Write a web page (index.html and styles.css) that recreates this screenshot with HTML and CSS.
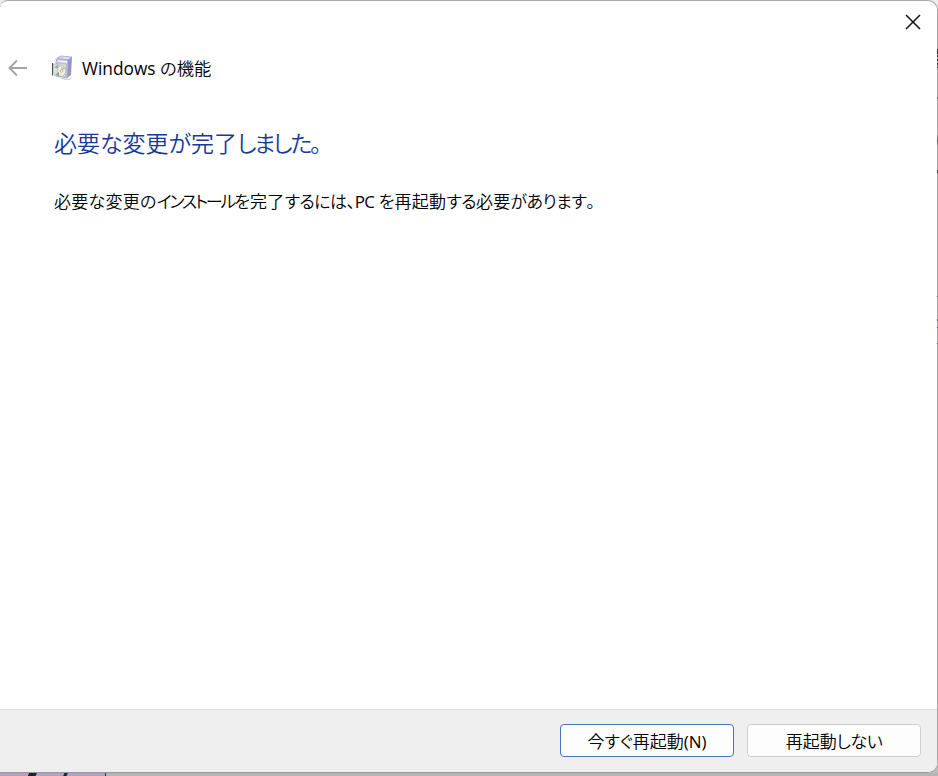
FILE: index.html
```html
<!doctype html>
<html lang="ja">
  <head>
    <meta charset="utf-8">
    <title>Windows の機能</title>
    <link rel="stylesheet" href="styles.css">
  </head>
<body>
<div class="dialog">
  <div class="titlebar">
    <svg class="close" width="16" height="16" viewBox="0 0 16 16"><path d="M1 1L15 15M15 1L1 15"/></svg>
  </div>
  <div class="header">
    <svg class="back" width="20" height="18" viewBox="0 0 20 18"><path d="M19 9H1.5M9 1.5L1.5 9L9 16.5"/></svg>
    <svg class="app_icon" width="24" height="26" viewBox="0 0 24 26">
      <path d="M6 22L18 24L22 21L19 25L14 25Z" fill="#d5d5d5"/>
      <path d="M6 3L10 1L21 2L17 5Z" fill="#dcdcf5" stroke="#9a9bbd" stroke-width=".7"/>
      <path d="M17 5L21 2L20 20L16 23Z" fill="#9395c4"/>
      <path d="M5 4L17 5L16 23L5 21Z" fill="#c6c8e6" stroke="#9a9bbd" stroke-width=".6"/>
      <path d="M7 6L16 7" stroke="#f4f4ff" stroke-width="1.5"/>
      <path d="M2.5 9L15 9L14.5 22L3 20.5Z" fill="#dfe4e6" stroke="#a7aeb3" stroke-width=".6"/>
      <path d="M1.5 8V20.5" stroke="#4c4e55" stroke-width="1.1"/>
      <path d="M3.5 12L8 9L6.5 14Z" fill="#8fb489"/>
      <ellipse cx="10.5" cy="16" rx="4.2" ry="5.3" fill="#f1efe2" stroke="#b4b6ae" stroke-width=".8"/>
      <path d="M10 11.5L14 13L11 16Z" fill="#dcc489"/>
      <path d="M4 20L8 17L8 21Z" fill="#8f9f93"/>
      <circle cx="10.5" cy="16" r="1.3" fill="#fff" stroke="#888" stroke-width=".6"/>
    </svg>
    <div class="app_name">Windows <span class="ja">の機能</span></div>
  </div>
  <div class="contents">
    <h1>必要な変更が完了<span class="kana">しました。</span></h1>
    <p>必要な変更の<span class="katakana">インストール</span>を完了<span class="hiragana">するには、</span><span class="latin">PC</span> を再起動<span class="hiragana">する</span>必要<span class="hiragana">があります</span>。</p>
  </div>
  <div class="footer">
    <button class="primary">今すぐ再起動<span class="latin_key">(N)</span></button>
    <button>再起動<span class="hiragana">しない</span></button>
  </div>
</div>
<div class="desktop"><div class="thumb"></div></div>
<div class="edge"></div>
</body>
</html>
```

FILE: styles.css
```css
html, body {
  margin: 0;
  height: 100%;
  overflow: hidden;
}

body {
  background: linear-gradient(#ededed 50%, #bdbdbd 50%);
  font-family: "Noto Sans CJK JP", sans-serif;
  font-feature-settings: "palt";
  color: #000;
}

.dialog {
  box-sizing: border-box;
  width: 938px;
  height: 773px;
  display: flex;
  flex-direction: column;
  background: #fff;
  border: 1px solid #a9a9a9;
  border-left: 0;
  border-bottom-color: #999;
  border-radius: 8px 10px 10px 0;
  overflow: hidden;
}

.titlebar {
  display: flex;
  justify-content: flex-end;
  height: 41px;
  padding: 12.5px 16.5px 0 0;
  box-sizing: border-box;
}

.close path {
  stroke: #111;
  stroke-width: 1.5;
}

.header {
  display: flex;
  align-items: center;
  height: 52px;
  padding-left: 8px;
}

.back path {
  fill: none;
  stroke: #a3a3a3;
  stroke-width: 1.8;
}

.app_icon {
  margin-left: 23px;
}

.app_name {
  margin-left: 7px;
  padding-top: 1px;
  font-family: "Open Sans", "Noto Sans CJK JP", sans-serif;
  font-size: 17.3px;
  line-height: 24px;
  white-space: nowrap;
}

.ja {
  font-family: "Noto Sans CJK JP", sans-serif;
  font-weight: 350;
}

.contents {
  flex: 1;
  padding: 31px 0 0 54px;
}

h1 {
  margin: 0;
  font-size: 23px;
  font-weight: 350;
  line-height: 34px;
  color: #173a9a;
}

p {
  margin: 29px 0 0;
  font-size: 17px;
  font-weight: 350;
  line-height: 26px;
  letter-spacing: .25px;
}

.kana {
  letter-spacing: -2.3px;
}

.katakana {
  letter-spacing: -2.2px;
}

.hiragana {
  letter-spacing: -.5px;
}

.latin {
  font-family: "Open Sans", sans-serif;
  font-weight: 400;
  letter-spacing: -.5px;
}

.latin_key {
  font-family: "Open Sans", sans-serif;
  font-weight: 400;
}

.footer {
  box-sizing: border-box;
  display: flex;
  justify-content: flex-end;
  gap: 13px;
  height: 63px;
  padding: 14px 16px 0 0;
  background: #efefef;
  border-top: 1px solid #dedede;
}

button {
  box-sizing: border-box;
  width: 174px;
  height: 33px;
  padding: 0;
  background: #fdfdfd;
  border: 1px solid #cfcfcf;
  border-radius: 4px;
  font-family: inherit;
  font-feature-settings: inherit;
  font-size: 17px;
  font-weight: 350;
  color: #000;
}

.primary {
  border-color: #4673c4;
}

.desktop {
  height: 3px;
  background: #b5b5b5;
}

.thumb {
  box-sizing: border-box;
  width: 106px;
  height: 3px;
  background: linear-gradient(115deg, transparent 26px, #20202c 27px, #20202c 33px, transparent 34px, transparent 58px, #20202c 59px, #20202c 61px, transparent 62px) #b3a1c1;
  border-right: 1px solid #333;
}

/* window behind, showing along the right border */
.edge {
  position: absolute;
  top: 0;
  right: 0;
  width: 1px;
  height: 350px;
  background:
    linear-gradient(#333, #333) 0 49px / 1px 5px no-repeat,
    repeating-linear-gradient(#333 0 2px, #999 2px 4px) 0 55px / 1px 13px no-repeat,
    linear-gradient(#555, #555) 0 97px / 1px 2px no-repeat,
    linear-gradient(#999, #555, #999) 0 135px / 1px 11px no-repeat,
    linear-gradient(#444, #444) 0 170px / 1px 3px no-repeat,
    linear-gradient(#555, #555) 0 296px / 1px 1px no-repeat,
    linear-gradient(#456580, #456580) 0 319px / 1px 2px no-repeat,
    linear-gradient(#555, #555) 0 327px / 1px 1px no-repeat,
    linear-gradient(#555, #555) 0 343px / 1px 1px no-repeat;
}
```
